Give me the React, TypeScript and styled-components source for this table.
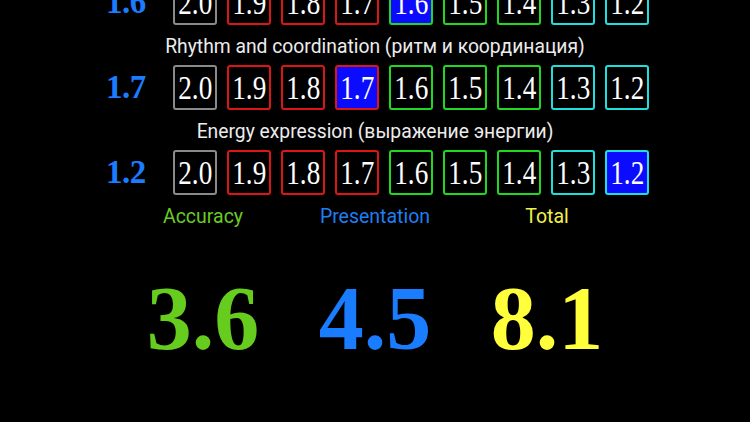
import React from "react";
import styled, { createGlobalStyle } from "styled-components";

const Global = createGlobalStyle`
  html, body { margin: 0; padding: 0; background: #000; }
  body { width: 750px; height: 422px; overflow: hidden; }
`;

const Page = styled.div`
  width: 750px;
  height: 422px;
  background: #000;
  overflow: hidden;
  display: flex;
  flex-direction: column;
`;

const Board = styled.div`
  margin-top: -20px;
  display: flex;
  flex-direction: column;
`;

const Row = styled.div`
  display: flex;
  align-items: center;
  height: 45px;
  padding-left: 106px;
`;

const Score = styled.div`
  width: 67px;
  font-family: "Liberation Serif", "Times New Roman", serif;
  font-weight: bold;
  font-size: 33px;
  color: #1a7dff;
  letter-spacing: -0.5px;
`;

const Boxes = styled.div`
  display: flex;
  gap: 10px;
`;

type Tone = "gray" | "red" | "green" | "cyan";
const borders: Record<Tone, string> = {
  gray: "#8a8a8a",
  red: "#dd1515",
  green: "#1fd81f",
  cyan: "#1fdede",
};

const Box = styled.div<{ $tone: Tone; $on: boolean }>`
  box-sizing: border-box;
  width: 44px;
  height: 45px;
  border: 2px solid ${(p) => borders[p.$tone]};
  border-radius: 3px;
  background: ${(p) => (p.$on ? "#0b0bff" : "#000")};
  display: flex;
  align-items: center;
  justify-content: center;
`;

const BoxText = styled.span`
  color: #fff;
  font-family: "Liberation Serif", "Times New Roman", serif;
  font-size: 34px;
  line-height: 34px;
  white-space: nowrap;
  transform: scaleX(0.8);
  margin-top: 1px;
`;

const Caption = styled.div`
  height: 40px;
  padding-top: 3px;
  box-sizing: border-box;
  display: flex;
  align-items: center;
  justify-content: center;
  font-family: Roboto, "Noto Sans", sans-serif;
  font-size: 19.3px;
  color: #ececec;
`;

const Totals = styled.div`
  display: grid;
  grid-template-columns: repeat(3, 172px);
  justify-content: center;
  margin-top: 11px;
`;

const Column = styled.div`
  display: flex;
  flex-direction: column;
  align-items: center;
`;

const Label = styled.div<{ $color: string }>`
  font-family: Roboto, "Noto Sans", sans-serif;
  font-size: 19.5px;
  line-height: 22px;
  color: ${(p) => p.$color};
`;

const Big = styled.div<{ $color: string }>`
  margin-top: 46px;
  font-family: "Liberation Serif", "Times New Roman", serif;
  font-weight: bold;
  font-size: 90px;
  line-height: 90px;
  color: ${(p) => p.$color};
`;

const values = ["2.0", "1.9", "1.8", "1.7", "1.6", "1.5", "1.4", "1.3", "1.2"];
const tones: Tone[] = ["gray", "red", "red", "red", "green", "green", "green", "cyan", "cyan"];

const rows = [
  { score: "1.6", caption: "Rhythm and coordination (ритм и координация)" },
  { score: "1.7", caption: "Energy expression (выражение энергии)" },
  { score: "1.2", caption: null },
];

const totals = [
  { label: "Accuracy", value: "3.6", color: "#66cc1e", labelColor: "#6acb26" },
  { label: "Presentation", value: "4.5", color: "#1a7dff", labelColor: "#1f7ef0" },
  { label: "Total", value: "8.1", color: "#ffff3c", labelColor: "#f2f04a" },
];

export default function App() {
  return (
    <Page>
      <Global />
      <Board>
        {rows.map((r) => (
          <React.Fragment key={r.score + (r.caption ?? "")}>
            <Row>
              <Score>{r.score}</Score>
              <Boxes>
                {values.map((v, i) => (
                  <Box key={v} $tone={tones[i]} $on={v === r.score}>
                    <BoxText>{v}</BoxText>
                  </Box>
                ))}
              </Boxes>
            </Row>
            {r.caption && <Caption>{r.caption}</Caption>}
          </React.Fragment>
        ))}
      </Board>
      <Totals>
        {totals.map((t) => (
          <Column key={t.label}>
            <Label $color={t.labelColor}>{t.label}</Label>
            <Big $color={t.color}>{t.value}</Big>
          </Column>
        ))}
      </Totals>
    </Page>
  );
}
